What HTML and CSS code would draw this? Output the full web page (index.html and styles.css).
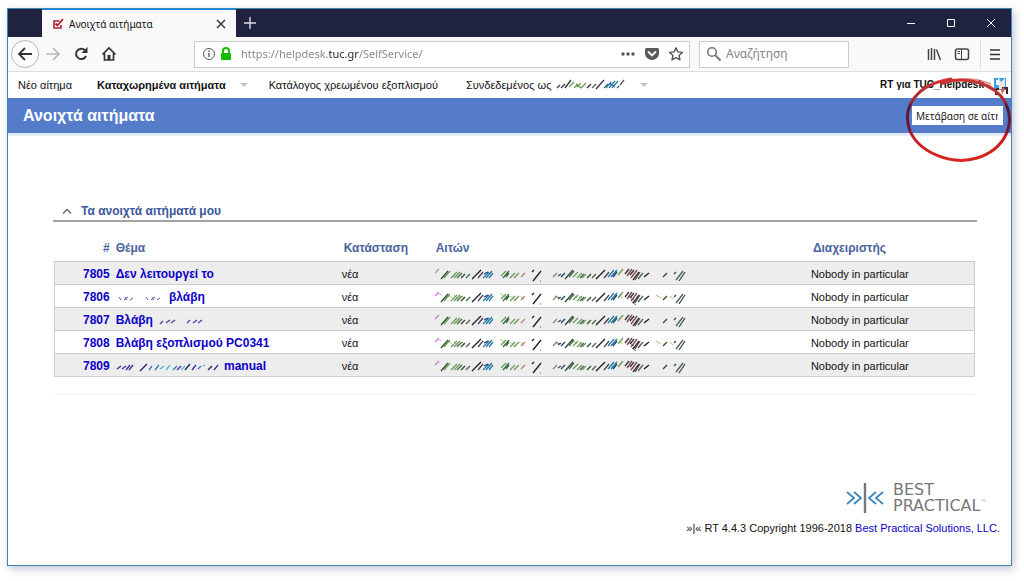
FILE: index.html
```html
<!DOCTYPE html>
<html lang="el">
<head>
<meta charset="utf-8">
<title>Ανοιχτά αιτήματα</title>
<link rel="stylesheet" href="styles.css">
</head>
<body>
<svg class="sprites" aria-hidden="true">
  <symbol id="scribble-name" viewBox="0 0 70 12">
    <g fill="none" stroke-width="1.3">
      <path stroke="#334" d="M1 9l3-3M5 9l4-4M9 9l6-8M31 9l4-4M40 10l8-9"/>
      <path stroke="#6a9a4a" d="M13 8l5-5M18 9l4-4M21 8l4-4M25 9l5-5M20 5l5 4"/>
      <path stroke="#465" d="M36 9l4-4M48 9l4-4"/>
      <path stroke="#2d7ba5" d="M50 9l5-6M53 9l6-7M56 9l6-7M54 4l5 4"/>
      <path stroke="#556" d="M61 9l2-2M64 6l4-5"/>
    </g>
  </symbol>
  <symbol id="scribble-requestor" viewBox="0 0 252 14">
    <g fill="none" stroke-width="1.3">
      <path stroke="#c684cf" d="M1 5l4-4"/>
      <path stroke="#2f4a2a" d="M7 11l7-8M27 10l4-4M131 11l8-9M153 10l4-4M229 9l4-4"/>
      <path stroke="#6a9a5a" d="M10 10l6-7M17 10l6-6M20 10l6-6M67 8l5-5M76 10l5-5M80 10l5-5M119 9l4-4M139 9l5-5M143 10l5-5M148 10l4-4M184 7l5-6"/>
      <path stroke="#3c6b46" d="M23 10l5-5M32 10l4-4M69 10l6-7M72 9l3-4M135 9l5-6M146 10l4-4M158 10l4-4M204 11l5-6M242 12l7-9"/>
      <path stroke="#1c1c20" d="M38 11l9-9M99 13l8-10M98 4l2-2M162 11l9-9M210 9l5-4"/>
      <path stroke="#445" d="M44 10l5-6M124 8l3-2M170 10l5-6M240 6l2-2M245 13l6-9"/>
      <path stroke="#2577a8" d="M49 10l6-6M52 10l6-7M55 10l4-5M174 9l6-7M177 9l6-7"/>
      <path stroke="#213f6b" d="M127 9l4-4M50 6l4-2M179 9l4-5"/>
      <path stroke="#7b4450" d="M193 8l5-7M197 10l6-8M201 12l5-8"/>
      <path stroke="#333" d="M191 6l4-5M196 7l4-5M199 12l6-8"/>
      <path stroke="#b97b73" d="M87 9l4-4"/>
      <path stroke="#8d82bd" d="M106 13h1"/>
    </g>
  </symbol>
  <symbol id="scribble-light" viewBox="0 0 252 14">
    <g fill="none" stroke="#a3cf6c" stroke-width="1">
      <path d="M13 3l5 4M20 4l4 4M28 5l3 3M66 2l6 5M76 5l5 4M87 5l3 4M138 3l5 4M145 5l5 4M185 4l4 3M222 4l5 3M236 5l3 3"/>
      <path stroke="#e3b2e6" d="M3 2l5 2"/>
      <path stroke="#55606c" d="M121 5l5 2M195 5l7 6M198 11l4 3"/>
    </g>
  </symbol>
  <symbol id="scribble-dots" viewBox="0 0 50 8">
    <path d="M3 3l2 3M8 6l4-3M9 3l2 3M14 6l3-2M30 3l2 3M35 6l4-3M36 3l2 3M41 6l3-2" stroke="#5a50b8" fill="none"/>
  </symbol>
  <symbol id="scribble-dashes" viewBox="0 0 50 8">
    <path d="M4 7l3-3M10 6l4-3M15 6l4-3M31 6l3-3M37 6l4-3M42 6l4-3" stroke="#4b3a9c" stroke-width="1.2" fill="none"/>
  </symbol>
  <symbol id="scribble-long" viewBox="0 0 105 10">
    <g fill="none" stroke-width="1.3">
      <path stroke="#3b2c98" d="M1 7l4-3M6 7l4-3M10 8l4-5M13 8l4-5M61 8l4-4M76 8l4-5M98 8l4-5"/>
      <path stroke="#2b1a55" d="M24 9l7-7M69 8l5-6M92 8l4-4"/>
      <path stroke="#2e77b8" d="M33 8l3-4M39 8l4-5M57 8l4-4M82 7l3-3"/>
      <path stroke="#4ab9cf" d="M44 7l4-3M50 8l4-5M65 8l4-4M87 4l2-1"/>
    </g>
  </symbol>
</svg>

<div class="window">
  <div class="titlebar">
    <div class="tab">
      <svg class="tab-icon" viewBox="0 0 12 12"><path d="M7.500 3H2v7h7V7" fill="none" stroke="#a3283a" stroke-width="1.600"/><path d="M3.500 5.500l2 2L11 1" fill="none" stroke="#b5172b" stroke-width="1.800"/></svg>
      <span class="tab-title">Ανοιχτά αιτήματα</span>
      <button class="icon-button tab-close" aria-label="Κλείσιμο καρτέλας"><svg width="10" height="10" viewBox="0 0 10 10"><path d="M1 1l8 8M9 1l-8 8" stroke="#333" stroke-width="1.400"/></svg></button>
    </div>
    <button class="icon-button new-tab" aria-label="Νέα καρτέλα"><svg width="12" height="12" viewBox="0 0 12 12"><path d="M6 0v12M0 6h12" stroke="#dcdce6" stroke-width="1.400"/></svg></button>
    <div class="window-controls">
      <button class="icon-button" aria-label="Ελαχιστοποίηση"><svg width="10" height="10" viewBox="0 0 10 10"><path d="M1 5.500h8" stroke="#fff"/></svg></button>
      <button class="icon-button" aria-label="Μεγιστοποίηση"><svg width="10" height="10" viewBox="0 0 10 10"><path d="M1.500 1.500h7v7h-7z" fill="none" stroke="#fff"/></svg></button>
      <button class="icon-button" aria-label="Κλείσιμο"><svg width="10" height="10" viewBox="0 0 10 10"><path d="M1 1l8 8M9 1l-8 8" stroke="#fff"/></svg></button>
    </div>
  </div>

  <div class="toolbar">
    <button class="icon-button back" aria-label="Πίσω"><svg width="16" height="16" viewBox="0 0 16 16"><path d="M15 8H2M8 2L2 8l6 6" fill="none" stroke="#333" stroke-width="1.800"/></svg></button>
    <button class="icon-button" aria-label="Εμπρός"><svg width="16" height="16" viewBox="0 0 16 16"><path d="M1 8h13M8 2l6 6-6 6" fill="none" stroke="#b5b5b8" stroke-width="1.600"/></svg></button>
    <button class="icon-button" aria-label="Ανανέωση"><svg width="16" height="16" viewBox="0 0 16 16"><path d="M12 4.200A5.200 5.200 0 1 0 13 10" fill="none" stroke="#333" stroke-width="2"/><path d="M14.500 1v6H8.500z" fill="#333"/></svg></button>
    <button class="icon-button" aria-label="Αρχική"><svg width="16" height="16" viewBox="0 0 16 16"><path d="M1.500 8.500L8 2l6.500 6.500M3.500 7.500V14h9V7.500" fill="none" stroke="#333" stroke-width="1.700"/><path d="M6.500 9h3v5h-3z" fill="#333"/></svg></button>

    <div class="field address">
      <svg width="14" height="14" viewBox="0 0 14 14"><circle cx="7" cy="7" r="5.500" fill="none" stroke="#5b5b5b"/><path d="M7 6v4M7 3.500V5" stroke="#5b5b5b" stroke-width="1.400"/></svg>
      <svg width="12" height="14" viewBox="0 0 12 14"><path d="M3 7V4a3 3 0 0 1 6 0v3" fill="none" stroke="#12bc00" stroke-width="2"/><rect x="1" y="6" width="10" height="7" rx="1" fill="#12bc00"/></svg>
      <input class="url" type="text" aria-label="Διεύθυνση" value="https://helpdesk.tuc.gr/SelfService/">
      <button class="icon-button small" aria-label="Ενέργειες σελίδας"><svg width="16" height="16" viewBox="0 0 16 16"><g fill="#555"><circle cx="3" cy="8" r="1.700"/><circle cx="8" cy="8" r="1.700"/><circle cx="13" cy="8" r="1.700"/></g></svg></button>
      <button class="icon-button small" aria-label="Pocket"><svg width="16" height="16" viewBox="0 0 16 16"><path d="M2.500 2h11Q15 2 15 3.500V7.500a7 6.500 0 0 1-14 0V3.500Q1 2 2.500 2z" fill="#5a5a5c"/><path d="M4.500 6L8 9.500 11.500 6" fill="none" stroke="#fff" stroke-width="1.800" stroke-linecap="round"/></svg></button>
      <button class="icon-button small" aria-label="Σελιδοδείκτης"><svg width="16" height="16" viewBox="0 0 16 16"><path d="M8 1.800l1.900 4.100 4.500.5-3.400 3 1 4.500L8 11.600 4 13.900l1-4.500-3.400-3 4.500-.5z" fill="none" stroke="#555" stroke-width="1.400" stroke-linejoin="round"/></svg></button>
    </div>

    <div class="field search">
      <svg width="16" height="16" viewBox="0 0 16 16"><circle cx="6" cy="6" r="4.300" fill="none" stroke="#777" stroke-width="1.600"/><path d="M9.300 9.300L14.500 14.500" stroke="#777" stroke-width="2"/></svg>
      <input type="text" aria-label="Αναζήτηση" placeholder="Αναζήτηση">
    </div>

    <button class="icon-button library" aria-label="Βιβλιοθήκη"><svg width="16" height="16" viewBox="0 0 16 16"><path d="M2.500 3v11M5.500 2v12M8.500 3v11M10.500 3.500L14.500 14" stroke="#444" stroke-width="1.500"/></svg></button>
    <button class="icon-button" aria-label="Πλευρική στήλη"><svg width="16" height="16" viewBox="0 0 16 16"><rect x="1.500" y="3" width="13" height="10.500" rx="2" fill="none" stroke="#444" stroke-width="1.500"/><path d="M7.500 3v10M3.500 5.500H6M3.500 7.500H6" stroke="#444"/></svg></button>
    <button class="icon-button menu-button" aria-label="Μενού"><svg width="16" height="16" viewBox="0 0 16 16"><path d="M3 4h10M3 8.500h10M3 13h10" stroke="#333" stroke-width="1.600"/></svg></button>
  </div>

  <nav class="menu">
    <a class="new" href="#">Νέο αίτημα</a>
    <a class="current" href="#">Καταχωρημένα αιτήματα <span class="caret"></span></a>
    <a class="catalog" href="#">Κατάλογος χρεωμένου εξοπλισμού</a>
    <a href="#">Συνδεδεμένος ως <svg class="user-name" width="70" height="12" aria-hidden="true"><use href="#scribble-name"/></svg> <span class="caret"></span></a>
    <span class="site">RT για TUC_Helpdesk</span>
    <svg class="site-logo" width="17" height="20" viewBox="0 0 17 20" aria-hidden="true"><path d="M2 3h12v12H2z" fill="#3ba0dc"/><path d="M6 1l3 6 4-4v11H7z" fill="#f1e5e2"/><path d="M4 5h3v5H4z" fill="#e8f5fc"/><path d="M4 14h3M4 14v5h3M10 13h5v6" fill="none" stroke="#3a2530" stroke-width="2"/><path d="M9 15l3-3 1 3-3 4z" fill="#df5b55"/></svg>
  </nav>

  <header class="page-header">
    <h1>Ανοιχτά αιτήματα</h1>
    <input class="goto" type="text" aria-label="Μετάβαση σε αίτημα" value="Μετάβαση σε αίτημα">
  </header>

  <main>
    <h2><svg width="10" height="6" viewBox="0 0 10 6" aria-hidden="true"><path d="M1 5.500L5 1.500l4 4" fill="none" stroke="#666" stroke-width="1.400"/></svg>Τα ανοιχτά αιτήματά μου</h2>
    <table>
      <colgroup><col class="col-id"><col class="col-subject"><col class="col-status"><col class="col-requestor"><col></colgroup>
      <thead><tr><th class="id">#</th><th>Θέμα</th><th>Κατάσταση</th><th>Αιτών</th><th>Διαχειριστής</th></tr></thead>
      <tbody>
        <tr><td class="id"><a href="#">7805</a></td><td><a href="#">Δεν λειτουργεί το</a></td><td>νέα</td><td><svg class="person" viewBox="0 0 252 14"><use href="#scribble-requestor"/></svg></td><td>Nobody in particular</td></tr>
        <tr><td class="id"><a href="#">7806</a></td><td><a href="#"><svg class="dots" viewBox="0 0 50 8"><use href="#scribble-dots"/></svg> βλάβη</a></td><td>νέα</td><td><svg class="person" viewBox="0 0 252 14"><use href="#scribble-light"/><use href="#scribble-requestor"/></svg></td><td>Nobody in particular</td></tr>
        <tr><td class="id"><a href="#">7807</a></td><td><a href="#">Βλάβη <svg class="dots" viewBox="0 0 50 8"><use href="#scribble-dashes"/></svg></a></td><td>νέα</td><td><svg class="person" viewBox="0 0 252 14"><use href="#scribble-requestor"/></svg></td><td>Nobody in particular</td></tr>
        <tr><td class="id"><a href="#">7808</a></td><td><a href="#">Βλάβη εξοπλισμού PC0341</a></td><td>νέα</td><td><svg class="person" viewBox="0 0 252 14"><use href="#scribble-light"/><use href="#scribble-requestor"/></svg></td><td>Nobody in particular</td></tr>
        <tr><td class="id"><a href="#">7809</a></td><td><a href="#"><svg class="long" viewBox="0 0 105 10"><use href="#scribble-long"/></svg> manual</a></td><td>νέα</td><td><svg class="person" viewBox="0 0 252 14"><use href="#scribble-requestor"/></svg></td><td>Nobody in particular</td></tr>
      </tbody>
    </table>
    <hr>
  </main>

  <footer>
    <div class="brand">
      <svg width="40" height="32" viewBox="0 0 40 32" aria-hidden="true"><path d="M2 10l7 6-7 6M9 10l7 6-7 6M31 10l-7 6 7 6M38 10l-7 6 7 6" fill="none" stroke="#3b87bd" stroke-width="1.800"/><path d="M20 1v30" stroke="#77777a" stroke-width="2.400"/></svg>
      <div class="wordmark"><span>BEST</span><span>PRACTICAL<small>™</small></span></div>
    </div>
    <p>»|« RT 4.4.3 Copyright 1996-2018 <a href="#">Best Practical Solutions, LLC</a>.</p>
  </footer>

  <svg class="highlight" viewBox="0 0 112 94" aria-hidden="true">
    <defs><linearGradient id="ink" x1="0" y1="0" x2="0" y2="1"><stop offset="0" stop-color="#cf3431"/><stop offset=".28" stop-color="#a52a30"/><stop offset=".33" stop-color="#5a1838"/><stop offset=".62" stop-color="#6e1634"/><stop offset=".7" stop-color="#c81e22"/><stop offset="1" stop-color="#d92420"/></linearGradient></defs>
    <path d="M39 11C64 3 92 12 102 30C114 54 100 78 74 86C48 94 16 80 7 59C-2 35 14 12 48 7" fill="none" stroke="url(#ink)" stroke-width="3" stroke-linecap="round"/>
    <path d="M39 10Q66 3 88 12" fill="none" stroke="#cf3431" stroke-opacity=".5" stroke-width="2"/>
  </svg>
</div>
</body>
</html>
```
FILE: styles.css
```css
* { box-sizing: border-box; }

body {
  margin: 0;
  min-height: 100vh;
  padding: 8px 12px 15px 7px;
  display: flex;
  background: #fff;
  color: #111;
  font: 11px/16px "Liberation Sans", Arial, sans-serif;
}

svg { flex: none; }
a { text-decoration: none; color: #0b00c8; }
input { font: inherit; border: 0; min-width: 0; outline: 0; }

.sprites { position: absolute; width: 0; height: 0; }

.window {
  position: relative;
  flex: 1;
  min-width: 0;
  display: flex;
  flex-direction: column;
  border: 1px solid #3f86b5;
  box-shadow: 2px 3px 8px rgba(60, 70, 110, .3);
}

.icon-button {
  display: flex;
  align-items: center;
  justify-content: center;
  flex: none;
  width: 28px;
  height: 28px;
  padding: 0;
  border: 0;
  background: none;
}

/* Title bar */
.titlebar {
  display: flex;
  align-items: center;
  height: 28px;
  padding-left: 34px;
  background: #202340;
}
.tab {
  display: flex;
  align-items: center;
  width: 194px;
  height: 28px;
  padding: 0 1px 0 10px;
  border-top: 1px solid #0a84ff;
  background: #f9f9fa;
  font: 10px/16px "Noto Sans", "Open Sans", sans-serif;
}
.tab-icon { width: 12px; height: 12px; }
.tab-title { flex: 1; padding-left: 5px; white-space: nowrap; }
.window-controls { display: flex; margin-left: auto; }
.window-controls .icon-button { width: 40px; }

/* Toolbar */
.toolbar {
  display: flex;
  align-items: center;
  height: 35px;
  padding: 0 3px;
  border-bottom: 1px solid #ddd;
  background: #f9f9fa;
}
.back { border: 1px solid #b8b8ba; border-radius: 50%; background: #fdfdfd; }
.field {
  display: flex;
  align-items: center;
  height: 27px;
  border: 1px solid #ccc;
  background: #fff;
  color: #777;
  font: 12px/16px "Noto Sans", "Open Sans", sans-serif;
}
.address { flex: 1; margin-left: 71px; padding: 0 3px 0 7px; gap: 4px; font-size: 11px; }
.address .small { width: 20px; }
.url {
  flex: 1;
  padding: 0 0 0 5px;
  color: transparent;
  background: linear-gradient(90deg, #858585 92px, #222 92px, #222 123px, #858585 123px);
  -webkit-background-clip: text;
  background-clip: text;
}
.search { width: 150px; margin-left: 9px; padding: 0 6px; gap: 2px; }
.search input { width: 100%; }
.search input::placeholder { color: #858585; }
.library { margin-left: 71px; }
.menu-button { margin-left: 4px; border-left: 1px solid #ddd; }

/* Site menu */
.menu {
  display: flex;
  align-items: center;
  height: 26px;
  padding: 0 2px 0 10px;
  white-space: nowrap;
}
.menu a { display: flex; align-items: center; color: #111; }
.menu .new { margin-right: 25px; }
.menu .current { margin-right: 21px; font-weight: bold; }
.menu .catalog { margin-right: 28px; }
.caret {
  margin-left: 14px;
  border: 4px solid transparent;
  border-top-color: #c3c3c3;
  border-bottom: 0;
}
.user-name { margin-left: 5px; }
.site { margin-left: auto; font-size: 10px; font-weight: bold; }
.site-logo { margin-left: 8px; }

.page-header {
  display: flex;
  align-items: center;
  justify-content: space-between;
  height: 38px;
  padding: 0 8px 0 15px;
  border-bottom: 3px solid #e2ecf8;
  background: #547ccb;
}
h1 { margin: 0; color: #fff; font-size: 16px; line-height: 24px; }
.goto {
  width: 91px;
  height: 19px;
  padding: 0 5px 0 4px;
  background: #fff;
  color: #222;
  font: 10px/16px "Noto Sans", "Open Sans", sans-serif;
}

/* Ticket list */
main { padding: 67px 34px 0 45px; }
h2 {
  display: flex;
  align-items: center;
  gap: 9px;
  margin: 0;
  padding: 0 0 1px 9px;
  border-bottom: 2px solid #a3a3a3;
  color: #3a589b;
  font-size: 12px;
  line-height: 16px;
}
table {
  width: calc(100% - 3px);
  margin: 13px 2px 0 1px;
  table-layout: fixed;
  border-collapse: collapse;
}
.col-id { width: 6%; }
.col-subject { width: 25%; }
.col-status { width: 10%; }
.col-requestor { width: 41%; }
th { height: 26px; padding: 0 4px; color: #4a64a0; font-size: 12px; text-align: left; }
td { height: 23px; padding: 3px 4px 0 2px; white-space: nowrap; }
td a { font-size: 12px; font-weight: bold; }
.id { padding-right: 0; text-align: right; }
th:nth-child(2), td:nth-child(2) { padding-left: 6px; }
tbody tr { border-top: 1px solid #ccc; border-bottom: 1px solid #ccc; }
tbody tr:nth-child(odd) { background: #ededed; }
tbody { border: 1px solid #ccc; }
td svg { vertical-align: middle; }
.person { width: 252px; height: 14px; }
.dots { width: 50px; height: 8px; }
.long { width: 105px; height: 10px; }
hr { margin: 17px 2px 0 1px; border: 0; border-top: 1px solid #eee; }

/* Footer */
footer { margin-top: auto; padding: 0 11px 29px; text-align: right; }
.brand { display: flex; justify-content: flex-end; align-items: center; gap: 8px; }
.wordmark {
  display: flex;
  flex-direction: column;
  min-width: 107px;
  color: #77777a;
  font: 16px/16px "DejaVu Sans", sans-serif;
  text-align: left;
}
.wordmark span { display: flex; align-items: flex-start; height: 16px; }
.wordmark small { font-size: 6px; line-height: 8px; }
footer p { margin: 6px 0 0; }

.highlight { position: absolute; top: 63px; right: -4px; width: 112px; height: 94px; pointer-events: none; }
```
